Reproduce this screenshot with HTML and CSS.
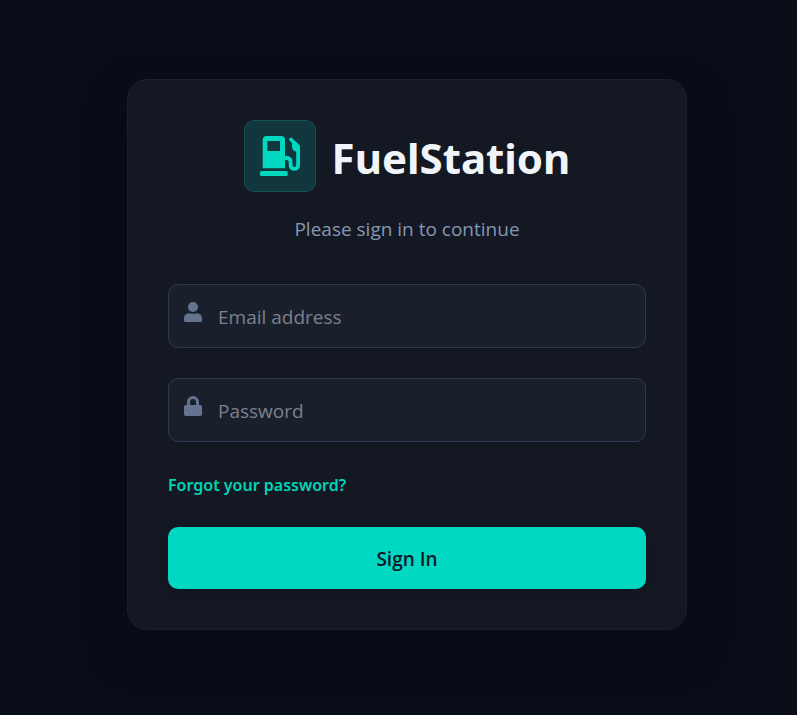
FILE: index.html
```html
<!DOCTYPE html>
<html lang="en">
<head>
<meta charset="utf-8">
<meta name="viewport" content="width=device-width, initial-scale=1">
<title>FuelStation</title>
<link rel="stylesheet" href="styles.css">
</head>
<body>
<main class="card">
  <header class="brand">
    <div class="logo">
      <svg viewBox="0 0 40 40" width="40" height="40" aria-hidden="true">
        <path fill="currentColor" fill-rule="evenodd" d="M6.700 0H21a4 4 0 0 1 4 4v28.300H2.700V4a4 4 0 0 1 4-4zM7.400 5v10H20V5z"/>
        <rect fill="currentColor" y="35" width="27.700" height="5" rx="1.500"/>
        <path fill="none" stroke="currentColor" stroke-width="3.800" stroke-linecap="round" stroke-linejoin="round" d="M25 22h1.200Q30.600 22 30.600 26v3.300c0 4.800 7.500 4.800 7.500 0V10.300L31 3.500"/>
        <path fill="currentColor" d="M32 5v5.500c0 3 2.400 5.500 6 5.500V9z"/>
      </svg>
    </div>
    <h1 class="title">FuelStation</h1>
  </header>
  <p class="subtitle">Please sign in to continue</p>
  <form class="form">
    <div class="field">
      <svg class="icon" viewBox="0 0 18 20" width="18" height="20" aria-hidden="true">
        <circle cx="9" cy="5" r="5" fill="currentColor"/>
        <path fill="currentColor" d="M0 16.500C0 13.500 2 11.200 5 11.200q4 1.200 8 0c3 0 5 2.300 5 5.300v2a1.500 1.500 0 0 1-1.500 1.500h-15A1.500 1.500 0 0 1 0 18.500z"/>
      </svg>
      <input class="input" type="email" placeholder="Email address" aria-label="Email address">
    </div>
    <div class="field">
      <svg class="icon" viewBox="0 0 18 20" width="18" height="20" aria-hidden="true">
        <rect y="9" width="18" height="11" rx="2" fill="currentColor"/>
        <path fill="none" stroke="currentColor" stroke-width="3" d="M4.500 10V6a4.500 4.500 0 0 1 9 0v4"/>
      </svg>
      <input class="input" type="password" placeholder="Password" aria-label="Password">
    </div>
    <a class="forgot" href="#forgot">Forgot your password?</a>
    <button class="submit" type="submit">Sign In</button>
  </form>
</main>
</body>
</html>
```
FILE: styles.css
```css
* {
  box-sizing: border-box;
}

body {
  margin: 0;
  min-height: 100vh;
  padding: 16px 0 22px 17px;
  display: flex;
  align-items: center;
  justify-content: center;
  background: #090d18;
  color: #f1f5f9;
  font-family: "Segoe UI", "Open Sans", "Noto Sans", sans-serif;
}

.card {
  width: 100%;
  max-width: 560px;
  padding: 40px;
  background: #141822;
  border: 1px solid #1c202d;
  border-radius: 20px;
  box-shadow: 0 20px 40px rgba(8, 9, 19, 0.5);
}

.brand {
  display: flex;
  align-items: center;
  justify-content: center;
  gap: 16px;
}

.logo {
  display: flex;
  align-items: center;
  justify-content: center;
  width: 72px;
  height: 72px;
  flex: none;
  color: #00d9c0;
  background: #12363e;
  border: 1px solid #10524f;
  border-radius: 10px;
}

.title,
.forgot {
  font-family: "Segoe UI", "Noto Sans", sans-serif;
}

.title {
  margin: 0;
  padding-top: 4px;
  font-size: 42px;
  line-height: 60px;
  font-weight: 700;
}

.subtitle {
  margin: 23px 0 41px;
  color: #8498b3;
  font-size: 19px;
  line-height: 28px;
  text-align: center;
}

.form {
  display: flex;
  flex-direction: column;
}

.field {
  display: flex;
  align-items: flex-start;
  height: 64px;
  margin-bottom: 30px;
  background: #1a1f2c;
  border: 1px solid #2c3b50;
  border-radius: 10px;
}

.field:focus-within {
  border-color: #00d9c0;
}

.icon {
  flex: none;
  margin: 17px 16px 0 15px;
  color: #64748f;
}

.input {
  flex: 1;
  min-width: 0;
  height: 100%;
  padding: 2px 16px 0 0;
  border: 0;
  outline: 0;
  background: transparent;
  color: #f1f5f9;
  font: inherit;
  font-size: 19px;
}

.input::placeholder {
  color: #7c818c;
}

.forgot {
  align-self: flex-start;
  margin-bottom: 28px;
  color: #00d4b8;
  font-size: 16px;
  line-height: 27px;
  font-weight: 600;
  text-decoration: none;
}

.submit {
  height: 62px;
  padding: 2px 16px 0;
  border: 0;
  border-radius: 10px;
  background: #00d8c2;
  box-shadow: 0 4px 12px rgba(20, 20, 32, 0.4);
  color: #0c1728;
  font: inherit;
  font-size: 19px;
  font-weight: 600;
  cursor: pointer;
}
```
